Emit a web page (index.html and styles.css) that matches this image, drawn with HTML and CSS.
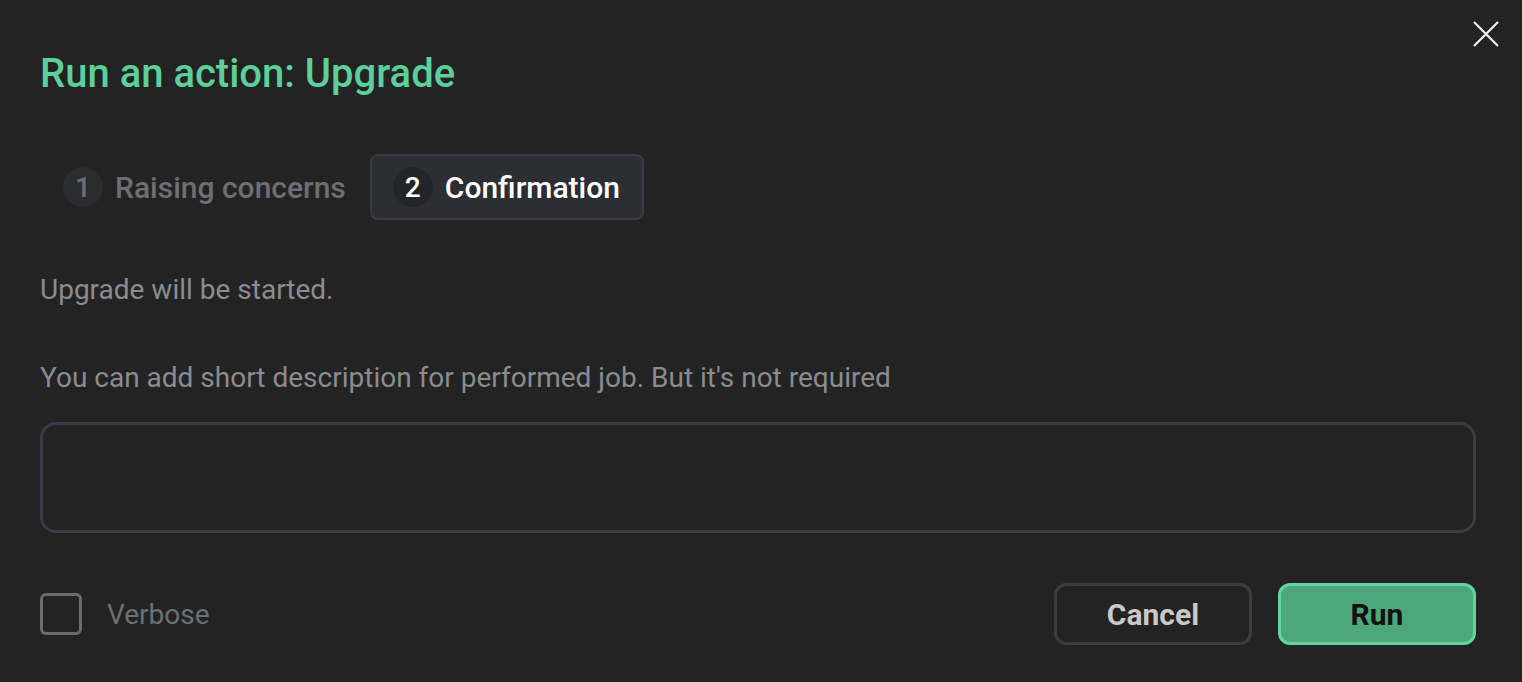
FILE: index.html
```html
<!DOCTYPE html>
<html>
<head>
    <title>Run an action</title>
    <link rel="stylesheet" href="styles.css">
</head>
<body>
    <div class="modal">
        <button class="close" aria-label="Close">
            <svg width="28" height="28" viewBox="0 0 28 28">
                <path d="M2 2 L26 26 M26 2 L2 26" stroke="#f2f2f2" stroke-width="2.2" fill="none"/>
            </svg>
        </button>

        <h1 class="title">Run an action: Upgrade</h1>

        <div class="steps">
            <div class="step">
                <span class="step-num">1</span>
                <span class="step-label">Raising concerns</span>
            </div>
            <div class="step active">
                <span class="step-num">2</span>
                <span class="step-label">Confirmation</span>
            </div>
        </div>

        <p class="note">Upgrade will be started.</p>
        <p class="note hint">You can add short description for performed job. But it's not required</p>

        <textarea class="desc"></textarea>

        <div class="footer">
            <label class="verbose">
                <span class="box"></span>
                <span>Verbose</span>
            </label>
            <div class="actions">
                <button class="btn cancel">Cancel</button>
                <button class="btn run">Run</button>
            </div>
        </div>
    </div>
</body>
</html>
```

FILE: styles.css
```css
html, body {
  margin: 0;
  height: 100%;
  background-color: #232324;
}

body {
  font-family: Roboto, "Noto Sans", Arial, sans-serif;
  color: #909296;
}

.modal {
  position: relative;
  padding: 50px 46px 0 40px;
  display: flex;
  flex-direction: column;
}

.close {
  position: absolute;
  top: 20px;
  right: 22px;
  background: none;
  border: none;
  padding: 0;
  cursor: pointer;
}

.title {
  margin: 0;
  font-size: 40px;
  font-weight: 500;
  line-height: 48px;
  color: #5ccf9c;
}

.steps {
  display: flex;
  gap: 0;
  margin-top: 56px;
}

.step {
  display: flex;
  align-items: center;
  gap: 12px;
  height: 62px;
  padding: 0 22px 0 21px;
  border: 2px solid transparent;
  border-radius: 8px;
  font-size: 30px;
  font-weight: 500;
  color: #6c6f74;
}

.step-num {
  width: 40px;
  height: 40px;
  border-radius: 50%;
  background-color: #2b2c30;
  display: flex;
  align-items: center;
  justify-content: center;
  font-size: 28px;
}

.step.active {
  background-color: #2c2e33;
  border-color: #383b41;
  color: #ffffff;
}

.step.active .step-num {
  background-color: #242529;
}

.note {
  margin: 52px 0 0;
  font-size: 28px;
  line-height: 36px;
  color: #8a8c90;
}

.hint {
  margin-top: 52px;
}

.desc {
  display: block;
  margin-top: 26px;
  height: 111px;
  flex: none;
  box-sizing: border-box;
  background: transparent;
  border: 3px solid #383d45;
  border-radius: 16px;
  resize: none;
  font-family: inherit;
  font-size: 28px;
  color: #c1c2c5;
  outline: none;
}

.footer {
  margin-top: 50px;
  display: flex;
  align-items: center;
  justify-content: space-between;
}

.verbose {
  display: flex;
  align-items: center;
  gap: 25px;
  font-size: 28px;
  color: #6c6f74;
}

.box {
  width: 42px;
  height: 42px;
  box-sizing: border-box;
  border: 3px solid #6a6c70;
  border-radius: 6px;
}

.actions {
  display: flex;
  gap: 26px;
}

.btn {
  width: 198px;
  height: 62px;
  box-sizing: border-box;
  border-radius: 12px;
  font-family: inherit;
  font-size: 30px;
  font-weight: 700;
  cursor: pointer;
}

.cancel {
  background: transparent;
  border: 3px solid #383c43;
  color: #c9c9c9;
}

.run {
  background-color: #4ca77a;
  border: 3px solid #63d3a1;
  color: #121212;
}
```
